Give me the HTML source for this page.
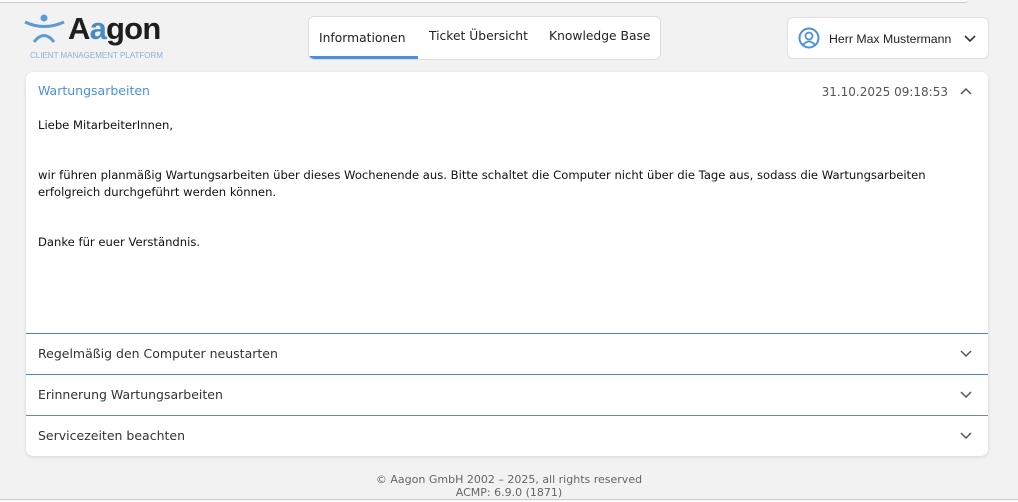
<!DOCTYPE html>
<html><head><meta charset="utf-8"><style>
*{margin:0;padding:0;box-sizing:border-box}
body{width:1018px;height:502px;background:#f2f2f2;font-family:"DejaVu Sans",Verdana,sans-serif;font-size:12px;color:#222;position:relative;overflow:hidden}
.topl{position:absolute;left:0;top:0;width:968px;height:3px;border-bottom:1px solid #ccc;background:#fafafa;border-radius:0 0 6px 0}
.tabs{position:absolute;left:308px;top:16px;width:353px;height:44px;background:#fff;border:1px solid #ddd;border-radius:6px;overflow:hidden}
.tab{position:absolute;top:0;height:44px;font-size:12.3px;color:#222}
.user{position:absolute;left:787px;top:17px;width:202px;height:42px;background:#fff;border:1px solid #e2e2e2;border-radius:6px}
.card{position:absolute;left:26px;top:72px;width:962px;height:384px;background:#fff;border-radius:7px;box-shadow:0 1px 3px rgba(0,0,0,.12);overflow:hidden}
.row{position:absolute;left:0;width:962px;height:41px;border-top:1px solid #4a86bf}
.row span{position:absolute;left:12px;top:12px;font-size:12.5px;color:#333}
.chev{position:absolute;right:16px;width:12px;height:8px}
.foot{position:absolute;left:0;width:1018px;text-align:center;font-size:11px;color:#666}
</style></head><body>
<div class="topl"></div>
<svg style="position:absolute;left:24px;top:14px" width="70" height="30" viewBox="0 0 70 30">
<circle cx="20" cy="4" r="3.5" fill="#5b9bd1"/>
<path d="M1 8 Q20 17 40 8" stroke="#5b9bd1" stroke-width="3" fill="none"/>
<path d="M10 28 Q20 15 30 28" stroke="#5b9bd1" stroke-width="3" fill="none"/>
</svg>
<div style="position:absolute;left:68px;top:11px;font-family:'Liberation Sans',sans-serif;font-size:31px;line-height:36px;font-weight:bold;color:#1e1e1e;letter-spacing:-0.8px">A<span style="color:#4a8ac4">a</span>gon</div>
<div style="position:absolute;left:30px;top:51px;font-family:'Liberation Sans',sans-serif;font-size:8px;color:#8ab3d6">CLIENT MANAGEMENT PLATFORM</div>
<div class="tabs">
<div class="tab" style="left:10px;top:14px">Informationen</div>
<div style="position:absolute;left:0;bottom:0;width:109px;height:3px;background:#4a8fe0"></div>
<div class="tab" style="left:120px;top:12px">Ticket Übersicht</div>
<div class="tab" style="left:240px;top:12px">Knowledge Base</div>
</div>
<div class="user">
<svg style="position:absolute;left:10px;top:9px" width="22" height="22" viewBox="0 0 22 22"><circle cx="11" cy="11" r="9.5" fill="none" stroke="#4a8fe0" stroke-width="2"/><circle cx="11" cy="9" r="3.5" fill="none" stroke="#4a8fe0" stroke-width="1.8"/><path d="M5 18 Q11 11 17 18" fill="none" stroke="#4a8fe0" stroke-width="1.8"/></svg>
<div style="position:absolute;left:41px;top:14px;font-family:'Liberation Sans',sans-serif;font-size:12.3px;color:#222">Herr Max Mustermann</div>
<svg style="position:absolute;left:176px;top:17px" width="12" height="8"><path d="M1 1 L6 6 L11 1" stroke="#333" stroke-width="1.6" fill="none"/></svg>
</div>
<div class="card">
<div style="position:absolute;left:12px;top:11px;font-size:12.5px;color:#4a8fe0">Wartungsarbeiten</div>
<div style="position:absolute;right:40px;top:13px;font-size:12px;color:#555">31.10.2025 09:18:53</div>
<svg class="chev" style="top:15px" width="12" height="8"><path d="M1 7 L6 2 L11 7" stroke="#555" stroke-width="1.5" fill="none"/></svg>
<div style="position:absolute;left:12px;top:45px;width:930px;line-height:16.7px;font-size:11.6px;color:#111">
Liebe MitarbeiterInnen,<br><br><br>
wir führen planmäßig Wartungsarbeiten über dieses Wochenende aus. Bitte schaltet die Computer nicht über die Tage aus, sodass die Wartungsarbeiten erfolgreich durchgeführt werden können.<br><br><br>
Danke für euer Verständnis.</div>
<div class="row" style="top:261px"><span>Regelmäßig den Computer neustarten</span><svg class="chev" style="top:16px" width="12" height="8"><path d="M1 1 L6 6 L11 1" stroke="#555" stroke-width="1.5" fill="none"/></svg></div>
<div class="row" style="top:302px"><span>Erinnerung Wartungsarbeiten</span><svg class="chev" style="top:16px" width="12" height="8"><path d="M1 1 L6 6 L11 1" stroke="#555" stroke-width="1.5" fill="none"/></svg></div>
<div class="row" style="top:343px;border-top-color:#6a8aa8"><span>Servicezeiten beachten</span><svg class="chev" style="top:16px" width="12" height="8"><path d="M1 1 L6 6 L11 1" stroke="#555" stroke-width="1.5" fill="none"/></svg></div>
</div>
<div class="foot" style="top:473px">© Aagon GmbH 2002 – 2025, all rights reserved</div>
<div class="foot" style="top:486px">ACMP: 6.9.0 (1871)</div>
<div style="position:absolute;left:0;top:499px;width:1018px;height:3px;border-top:1px solid #ccc;background:#fafafa"></div>
</body></html>
